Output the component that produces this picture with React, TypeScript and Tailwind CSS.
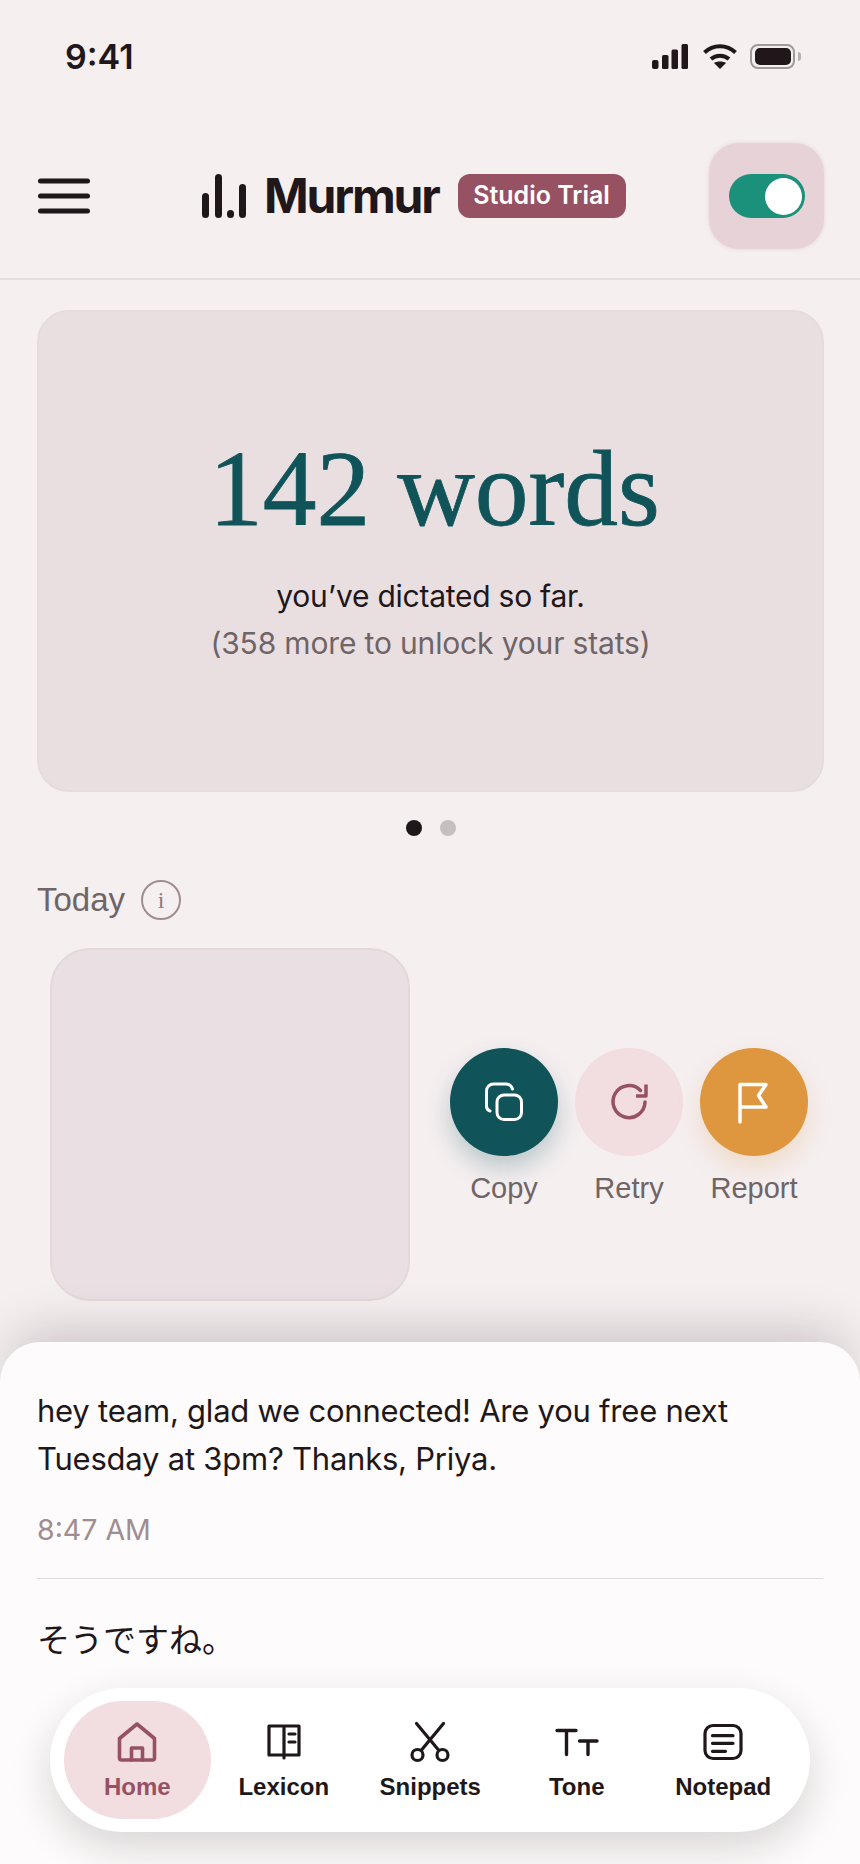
const NAV = [
  { label: 'Home', active: true },
  { label: 'Lexicon' },
  { label: 'Snippets' },
  { label: 'Tone' },
  { label: 'Notepad' },
]

function NavIcon({ name }: { name: string }) {
  const common = {
    width: 44,
    height: 44,
    viewBox: '0 0 44 44',
    fill: 'none',
    stroke: 'currentColor',
    strokeWidth: 3.2,
    strokeLinecap: 'round' as const,
    strokeLinejoin: 'round' as const,
  }
  if (name === 'Home') {
    return (
      <svg {...common} strokeWidth={3.6}>
        <path d="M22 3 L39.5 17.5 V37 a2 2 0 0 1 -2 2 H6.5 a2 2 0 0 1 -2 -2 V17.5 Z" />
        <path d="M16.5 39 V27 H27.5 V39" />
      </svg>
    )
  }
  if (name === 'Lexicon') {
    return (
      <svg {...common}>
        <path d="M22 5 H7 V34 H37 V5 H22 V37" />
        <path d="M27 13 H33 M27 21 H33" />
      </svg>
    )
  }
  if (name === 'Snippets') {
    return (
      <svg {...common}>
        <path d="M8.5 2.5 L30.5 29 M35.5 2.5 L13.5 29" />
        <circle cx="9.5" cy="34" r="5.5" />
        <circle cx="34.5" cy="34" r="5.5" />
      </svg>
    )
  }
  if (name === 'Tone') {
    return (
      <svg {...common} strokeWidth={3.4}>
        <path d="M2 9.5 H21 M11.5 9.5 V33.5 M24.5 20 H42 M33 20 V33.5" />
      </svg>
    )
  }
  return (
    <svg {...common}>
      <rect x="4" y="4.5" width="36" height="33" rx="8" />
      <path d="M11.5 14.7 H32 M11.5 22.3 H32 M11.5 30.3 H24.5" />
    </svg>
  )
}

export default function App() {
  return (
    <div className="relative h-[1864px] w-[860px] overflow-hidden bg-[#f5eff0] font-['Inter',sans-serif] text-[#1f1719]">
      {/* status bar */}
      <div className="flex h-[112px] items-center justify-between pl-[65px] pr-[59px]">
        <span className="text-[34px] font-semibold">9:41</span>
        <div className="flex items-center">
          <svg width="36" height="25" viewBox="0 0 36 25" fill="#1f1719">
            <rect x="0" y="16" width="6.5" height="9" rx="2" />
            <rect x="10" y="11" width="6.5" height="14" rx="1.5" />
            <rect x="19.5" y="5.5" width="6.5" height="19.5" rx="1.5" />
            <rect x="29.5" y="0" width="6.5" height="25" rx="1.5" />
          </svg>
          <svg className="ml-[15px]" width="34" height="25" viewBox="0 0 34 25" fill="none" stroke="#1f1719" strokeWidth="4">
            <path d="M1.5 8.5 C10 0 24 0 32.5 8.5" />
            <path d="M8 15 C13 10.5 21 10.5 26 15" />
            <path d="M17 25 L11 19 C14 17 20 17 23 19 Z" fill="#1f1719" stroke="none" />
          </svg>
          <div className="ml-[13px] flex items-center">
            <div className="flex h-[25px] w-[45px] items-center justify-center rounded-[8px] border-[2.5px] border-[#a09a9b]">
              <div className="h-[17px] w-[36px] rounded-[5px] bg-[#1f1719]" />
            </div>
            <div className="ml-[3px] h-[9px] w-[3px] rounded-r-sm bg-[#b5b0b1]" />
          </div>
        </div>
      </div>

      {/* header */}
      <header className="flex h-[168px] items-center border-b-2 border-[#e4dedf] pl-[38px] pr-[36px] pt-[2px]">
        <svg width="52" height="36" viewBox="0 0 52 36" stroke="#1f1719" strokeWidth="5" strokeLinecap="round">
          <path d="M2.5 3 H49.5 M2.5 18 H49.5 M2.5 33 H49.5" />
        </svg>
        <div className="ml-[112px] flex h-[44px] items-center">
          <svg width="44" height="44" viewBox="0 0 44 44" fill="#1f1719">
            <rect x="0" y="19" width="7" height="25" rx="3.5" />
            <rect x="13" y="0" width="7" height="44" rx="3.5" />
            <rect x="25" y="36" width="7" height="8" rx="3.5" />
            <rect x="37" y="10" width="7" height="34" rx="3.5" />
          </svg>
          <span className="ml-[18px] text-[48px] font-bold tracking-[-2.2px]">Murmur</span>
          <span className="ml-[19px] flex h-[44px] w-[168px] items-center justify-center rounded-[12px] bg-[#965162] text-[25px] font-semibold text-white">
            Studio Trial
          </span>
        </div>
        <div className="ml-auto flex h-[106px] w-[115px] items-center justify-center rounded-[30px] bg-[#e6d2d7] shadow-[0_0_4px_#e6d2d7]">
          <div className="flex h-[44px] w-[76px] items-center justify-end rounded-full bg-[#1b917b] pr-[3px]">
            <div className="h-[37px] w-[37px] rounded-full bg-white" />
          </div>
        </div>
      </header>

      <main className="px-[37px] pt-[30px]">
        {/* hero card */}
        <section className="flex h-[482px] w-[787px] flex-col items-center rounded-[32px] border-2 border-[#e5dcde] bg-[#e9dfe1] pt-[115px]">
          <h1 className="pl-[8px] font-['Liberation_Serif',serif] text-[107.5px] font-normal leading-[124px] text-[#10545a] [-webkit-text-stroke:0.8px_#10545a]">
            142 words
          </h1>
          <p className="mt-[25px] text-[30px] leading-[40px] tracking-[-0.25px] text-[#1f1719]">you’ve dictated so far.</p>
          <p className="mt-[7px] text-[30px] leading-[40px] tracking-[-0.16px] text-[#6f6466]">(358 more to unlock your stats)</p>
        </section>

        <div className="mt-[28px] flex justify-center gap-[18px] pl-[1px]">
          <span className="h-[16px] w-[16px] rounded-full bg-[#1f1719]" />
          <span className="h-[16px] w-[16px] rounded-full bg-[#c4bfc0]" />
        </div>

        <div className="mt-[44px] flex items-center gap-[16px]">
          <span className="font-['Liberation_Sans',sans-serif] text-[33px] leading-[40px] text-[#6f6466]">Today</span>
          <span className="flex h-[40px] w-[40px] items-center justify-center rounded-full border-2 border-[#a08d91] font-['Liberation_Serif',serif] text-[24px] text-[#8f7a7f]">
            i
          </span>
        </div>

        <div className="mt-[28px] flex items-center pl-[13px]">
          <div className="h-[353px] w-[360px] rounded-[40px] border-2 border-[#e3d9db] bg-[#eadfe2]" />
          <div className="ml-[40px] mt-[9px] flex gap-[17px] font-['Liberation_Sans',sans-serif] text-[29px] text-[#6f6466]">
            <div className="flex w-[108px] flex-col items-center gap-[11px]">
              <div className="flex h-[108px] w-[108px] items-center justify-center rounded-full bg-[#10545a] text-white shadow-[0_12px_24px_rgba(16,84,90,0.25)]">
                <svg width="44" height="44" viewBox="0 0 44 44" fill="none" stroke="currentColor" strokeWidth="3" strokeLinecap="round" strokeLinejoin="round">
                  <rect x="15" y="15" width="24.5" height="24.5" rx="7" />
                  <path d="M8 31 Q4.5 30 4.5 26 V11 a7 7 0 0 1 7 -7 H24 a7 7 0 0 1 6.5 5" />
                </svg>
              </div>
              <span>Copy</span>
            </div>
            <div className="flex w-[108px] flex-col items-center gap-[11px]">
              <div className="flex h-[108px] w-[108px] items-center justify-center rounded-full bg-[#f2dde1] text-[#965162]">
                <svg width="44" height="44" viewBox="0 0 44 44" fill="none" stroke="currentColor" strokeWidth="3.5" strokeLinejoin="round">
                  <path d="M33.5 10.5 A16 16 0 1 0 38 22" strokeLinecap="round" />
                  <path d="M39 4.5 V16 H29" />
                </svg>
              </div>
              <span>Retry</span>
            </div>
            <div className="flex w-[108px] flex-col items-center gap-[11px]">
              <div className="flex h-[108px] w-[108px] items-center justify-center rounded-full bg-[#de973e] text-white shadow-[0_12px_24px_rgba(222,151,62,0.22)]">
                <svg width="44" height="44" viewBox="0 0 44 44" fill="none" stroke="currentColor" strokeWidth="3.5" strokeLinecap="round" strokeLinejoin="round">
                  <path d="M8 42 V4.5 H34 L26.5 15.5 L34 27 H8" />
                </svg>
              </div>
              <span>Report</span>
            </div>
          </div>
        </div>
      </main>

      {/* transcript sheet */}
      <section className="absolute inset-x-0 bottom-0 top-[1342px] rounded-t-[40px] bg-[#fdfbfb] px-[37px] pt-[45px] shadow-[0_-24px_50px_-16px_rgba(40,25,30,0.22)]">
        <p className="text-[31px] leading-[48px] tracking-[-0.23px] text-[#1f1719]">
          hey team, glad we connected! Are you free next
          <br />
          Tuesday at 3pm? Thanks, Priya.
        </p>
        <p className="mt-[29px] text-[28.5px] leading-[36px] text-[#a08d91]">8:47 AM</p>
        <div className="mt-[30px] h-[1px] bg-[#e0d9da]" />
        <p className="mt-[35px] font-['Noto_Sans_CJK_JP',sans-serif] text-[33px] leading-[48px]">そうですね。</p>
      </section>

      {/* bottom nav */}
      <nav className="absolute bottom-[32px] left-[50px] flex h-[144px] w-[760px] items-center rounded-[72px] bg-white pl-[14px] font-['Liberation_Sans',sans-serif] shadow-[0_16px_40px_rgba(30,20,25,0.16)]">
        {NAV.map((item) => (
          <div
            key={item.label}
            className={
              item.active
                ? 'flex h-[118px] w-[146.5px] flex-col items-center justify-center gap-[6px] rounded-[59px] bg-[#f2dde1] pt-[4px] text-[#965162]'
                : 'flex h-[118px] w-[146.5px] flex-col items-center justify-center gap-[6px] pt-[4px] text-[#1f1719]'
            }
          >
            <NavIcon name={item.label} />
            <span className="text-[24px] font-bold leading-[32px]">{item.label}</span>
          </div>
        ))}
      </nav>
    </div>
  )
}
